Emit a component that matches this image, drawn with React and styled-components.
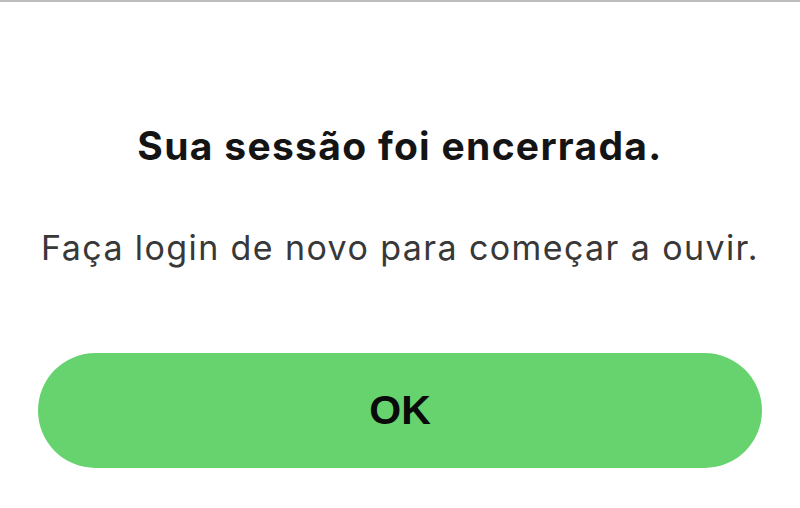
import React from 'react';
import styled, {createGlobalStyle} from 'styled-components';

const GlobalStyle = createGlobalStyle`
html, body {
  margin: 0;
  padding: 0;
  background: #ffffff;
}
`;

const Screen = styled.div`
width: 800px;
height: 508px;
box-sizing: border-box;
border-top: 2px solid #bdbdbd;
background: #ffffff;
display: flex;
flex-direction: column;
align-items: center;
padding: 124px 38px 0;
font-family: Inter, "Noto Sans", sans-serif;
`;

const Title = styled.h1`
margin: 0;
font-size: 39px;
line-height: 1;
font-weight: 700;
color: #141414;
letter-spacing: 1.3px;
white-space: nowrap;
`;

const Message = styled.p`
margin: 66px 0 0;
font-size: 34px;
line-height: 1;
font-weight: 400;
color: #383838;
letter-spacing: 1.4px;
white-space: nowrap;
`;

const Button = styled.button`
margin-top: 88px;
width: 724px;
height: 115px;
flex-shrink: 0;
border: none;
border-radius: 58px;
background: #66d36f;
color: #0a0a0a;
font-family: "Liberation Sans", Arial, sans-serif;
font-weight: 700;
font-size: 41px;
display: flex;
align-items: center;
justify-content: center;
cursor: pointer;
`;

export default function App() {
  return (
    <>
      <GlobalStyle />
      <Screen>
        <Title>Sua sessão foi encerrada.</Title>
        <Message>Faça login de novo para começar a ouvir.</Message>
        <Button>OK</Button>
      </Screen>
    </>
  );
}
